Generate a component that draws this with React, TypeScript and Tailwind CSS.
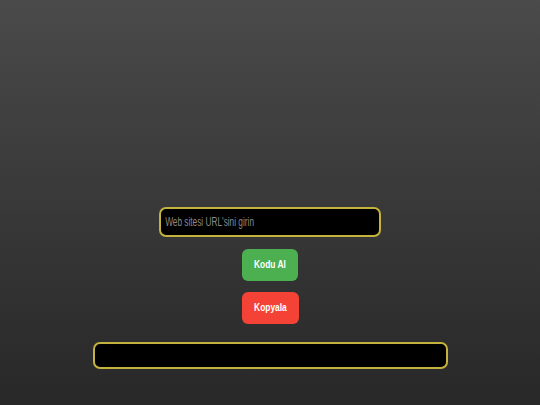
import React from "react";

export default function App() {
  return (
    <div
      className="w-[540px] h-[405px] bg-gradient-to-b from-[#4a4a4a] to-[#282828] flex flex-col items-center pt-[207px]"
      style={{ fontFamily: '"Liberation Sans", Arial, sans-serif' }}
    >
      {/* narrow font not available, so the text is squeezed */}
      <div className="w-[222px] h-[30px] bg-black border-2 border-[#c4b23e] rounded-[7px] overflow-hidden">
        <input
          type="text"
          placeholder="Web sitesi URL'sini girin"
          className="w-[312px] h-full bg-transparent pl-[6px] text-[12px] text-white placeholder:text-[#8a8a8a] outline-none origin-left scale-x-[0.69]"
        />
      </div>
      <button className="mt-[12px] w-[56px] h-[32px] bg-[#4caf50] text-white font-bold text-[10.5px] rounded-[6px]">
        <span className="inline-block scale-x-[0.8]">Kodu Al</span>
      </button>
      <button className="mt-[11px] w-[57px] h-[32px] bg-[#f44336] text-white font-bold text-[10.5px] rounded-[6px]">
        <span className="inline-block scale-x-[0.8]">Kopyala</span>
      </button>
      <div className="mt-[18px] w-[355px] h-[27px] bg-black border-2 border-[#c4b23e] rounded-[7px]" />
    </div>
  );
}
